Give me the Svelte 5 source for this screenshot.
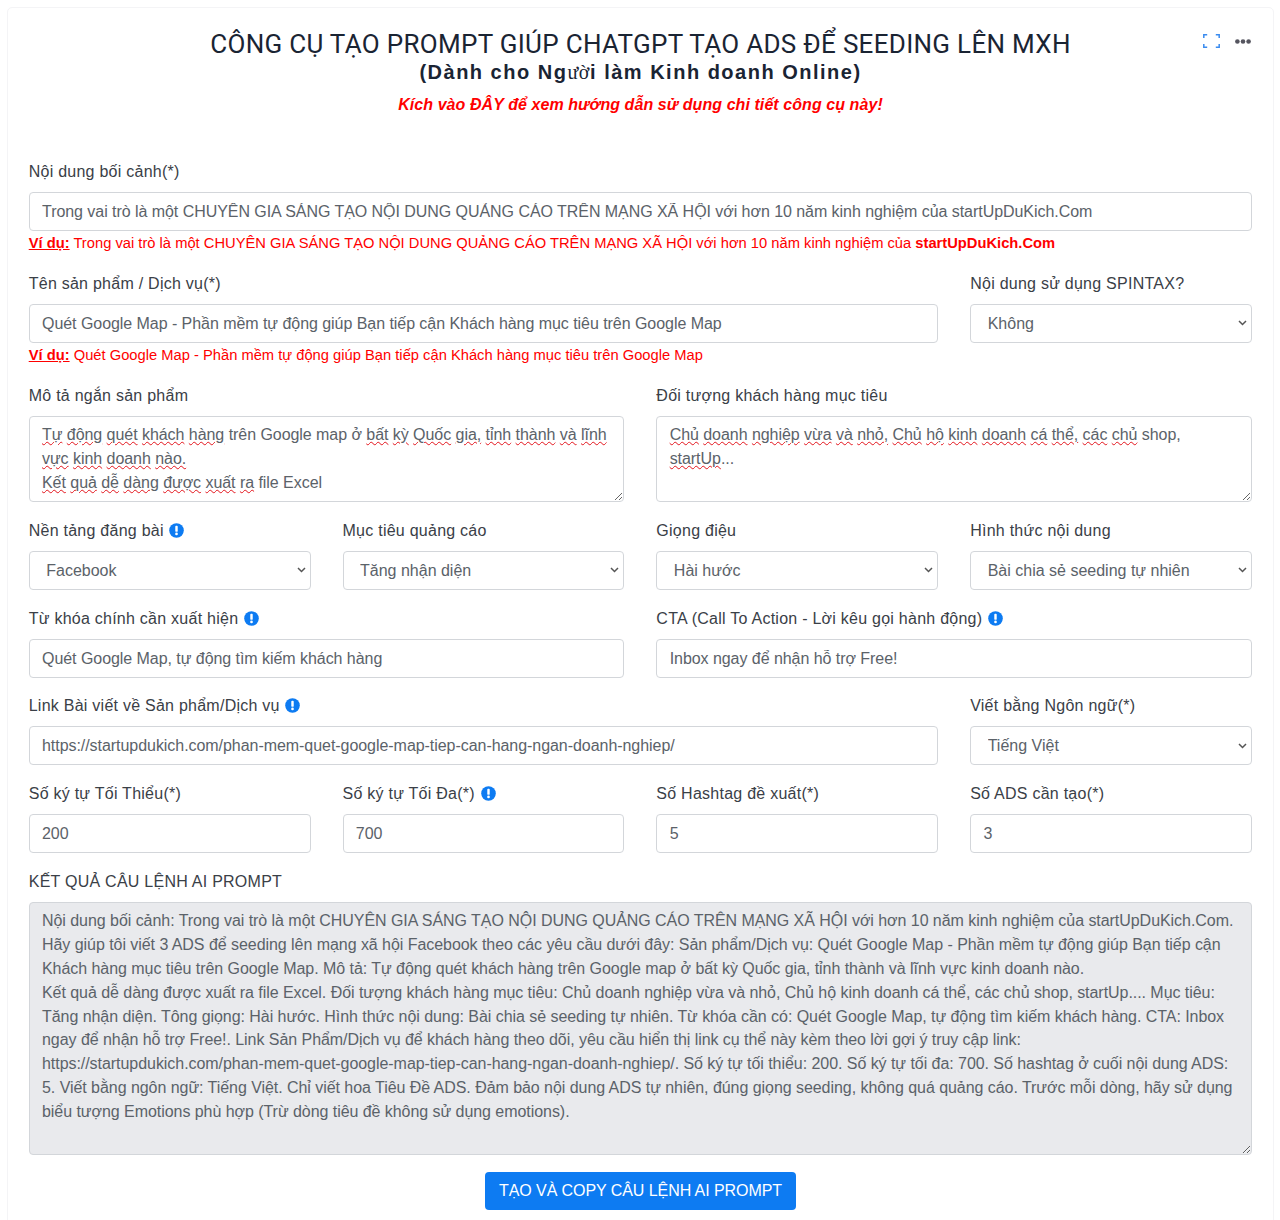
<script>
  const bullet = (t) => t.split(' ');
  const result = `Nội dung bối cảnh: Trong vai trò là một CHUYÊN GIA SÁNG TẠO NỘI DUNG QUẢNG CÁO TRÊN MẠNG XÃ HỘI với hơn 10 năm kinh nghiệm của startUpDuKich.Com. Hãy giúp tôi viết 3 ADS để seeding lên mạng xã hội Facebook theo các yêu cầu dưới đây: Sản phẩm/Dịch vụ: Quét Google Map - Phần mềm tự động giúp Bạn tiếp cận Khách hàng mục tiêu trên Google Map. Mô tả: Tự động quét khách hàng trên Google map ở bất kỳ Quốc gia, tỉnh thành và lĩnh vực kinh doanh nào.
Kết quả dễ dàng được xuất ra file Excel. Đối tượng khách hàng mục tiêu: Chủ doanh nghiệp vừa và nhỏ, Chủ hộ kinh doanh cá thể, các chủ shop, startUp.... Mục tiêu: Tăng nhận diện. Tông giọng: Hài hước. Hình thức nội dung: Bài chia sẻ seeding tự nhiên. Từ khóa cần có: Quét Google Map, tự động tìm kiếm khách hàng. CTA: Inbox ngay để nhận hỗ trợ Free!. Link Sản Phẩm/Dịch vụ để khách hàng theo dõi, yêu cầu hiển thị link cụ thể này kèm theo lời gợi ý truy cập link: https://startupdukich.com/phan-mem-quet-google-map-tiep-can-hang-ngan-doanh-nghiep/. Số ký tự tối thiểu: 200. Số ký tự tối đa: 700. Số hashtag ở cuối nội dung ADS: 5. Viết bằng ngôn ngữ: Tiếng Việt. Chỉ viết hoa Tiêu Đề ADS. Đảm bảo nội dung ADS tự nhiên, đúng giọng seeding, không quá quảng cáo. Trước mỗi dòng, hãy sử dụng biểu tượng Emotions phù hợp (Trừ dòng tiêu đề không sử dụng emotions).`;
</script>

{#snippet info()}
  <svg class="info" viewBox="0 0 16 16" aria-hidden="true">
    <circle cx="8" cy="8" r="7.8" fill="#0d7bf2" />
    <rect x="6.7" y="3" width="2.6" height="6.4" rx="1" fill="#fff" />
    <circle cx="8" cy="11.7" r="1.45" fill="#fff" />
  </svg>
{/snippet}

{#snippet wavy(text)}
  {#each bullet(text) as word, i}{#if i > 0}{' '}{/if}<span class="wavy">{word}</span>{/each}
{/snippet}

<div class="card">
  <header>
    <h1>CÔNG CỤ TẠO PROMPT GIÚP CHATGPT TẠO ADS ĐỂ SEEDING LÊN MXH</h1>
    <h2>(Dành cho Ng<span class="fallback">ườ</span>i làm Kinh doanh Online)</h2>
    <a href="#guide">Kích vào ĐÂY để xem hướng dẫn sử dụng chi tiết công cụ này!</a>
    <div class="tools">
      <svg class="expand" viewBox="0 0 17 14" aria-hidden="true">
        <path d="M.8 4V.8h3.4M12.8.8h3.4V4M16.2 10v3.2h-3.4M4.2 13.2H.8V10" fill="none" stroke="#3a8bef" stroke-width="1.5" />
      </svg>
      <svg class="dots" viewBox="0 0 16 5" aria-hidden="true">
        <circle cx="2.4" cy="2.5" r="2.3" /><circle cx="8" cy="2.5" r="2.3" /><circle cx="13.6" cy="2.5" r="2.3" />
      </svg>
    </div>
  </header>

  <form>
    <div class="field full">
      <label for="context">Nội dung bối cảnh(*)</label>
      <input id="context" value="Trong vai trò là một CHUYÊN GIA SÁNG TẠO NỘI DUNG QUẢNG CÁO TRÊN MẠNG XÃ HỘI với hơn 10 năm kinh nghiệm của startUpDuKich.Com" />
      <p class="hint"><b>Ví dụ:</b> Trong vai trò là một CHUYÊN GIA SÁNG TẠO NỘI DUNG QUẢNG CÁO TRÊN MẠNG XÃ HỘI với hơn 10 năm kinh nghiệm của <strong>startUpDuKich.Com</strong></p>
    </div>

    <div class="field span3">
      <label for="product">Tên sản phẩm / Dịch vụ(*)</label>
      <input id="product" value="Quét Google Map - Phần mềm tự động giúp Bạn tiếp cận Khách hàng mục tiêu trên Google Map" />
      <p class="hint"><b>Ví dụ:</b> Quét Google Map - Phần mềm tự động giúp Bạn tiếp cận Khách hàng mục tiêu trên Google Map</p>
    </div>
    <div class="field">
      <label for="spintax">Nội dung sử dụng SPINTAX?</label>
      <select id="spintax"><option>Không</option><option>Có</option></select>
    </div>

    <div class="field span2">
      <span class="label">Mô tả ngắn sản phẩm</span>
      <div class="area" role="textbox" tabindex="0">{@render wavy('Tự động quét khách hàng')} trên Google map ở {@render wavy('bất kỳ Quốc gia, tỉnh thành và lĩnh vực kinh doanh nào.')}<br />{@render wavy('Kết quả dễ dàng được xuất ra')} file Excel</div>
    </div>
    <div class="field span2">
      <span class="label">Đối tượng khách hàng mục tiêu</span>
      <div class="area" role="textbox" tabindex="0">{@render wavy('Chủ doanh nghiệp vừa và nhỏ, Chủ hộ kinh doanh cá thể, các chủ')} shop, <span class="wavy">startUp</span>...</div>
    </div>

    <div class="field">
      <label for="platform">Nền tảng đăng bài {@render info()}</label>
      <select id="platform"><option>Facebook</option></select>
    </div>
    <div class="field">
      <label for="goal">Mục tiêu quảng cáo</label>
      <select id="goal"><option>Tăng nhận diện</option></select>
    </div>
    <div class="field">
      <label for="tone">Giọng điệu</label>
      <select id="tone"><option>Hài hước</option></select>
    </div>
    <div class="field">
      <label for="format">Hình thức nội dung</label>
      <select id="format"><option>Bài chia sẻ seeding tự nhiên</option></select>
    </div>

    <div class="field span2">
      <label for="keyword">Từ khóa chính cần xuất hiện {@render info()}</label>
      <input id="keyword" value="Quét Google Map, tự động tìm kiếm khách hàng" />
    </div>
    <div class="field span2">
      <label for="cta">CTA (Call To Action - Lời kêu gọi hành động) {@render info()}</label>
      <input id="cta" value="Inbox ngay để nhận hỗ trợ Free!" />
    </div>

    <div class="field span3">
      <label for="link">Link Bài viết về Sản phẩm/Dịch vụ {@render info()}</label>
      <input id="link" value="https://startupdukich.com/phan-mem-quet-google-map-tiep-can-hang-ngan-doanh-nghiep/" />
    </div>
    <div class="field">
      <label for="lang">Viết bằng Ngôn ngữ(*)</label>
      <select id="lang"><option>Tiếng Việt</option></select>
    </div>

    <div class="field">
      <label for="min">Số ký tự Tối Thiểu(*)</label>
      <input id="min" value="200" />
    </div>
    <div class="field">
      <label for="max">Số ký tự Tối Đa(*) {@render info()}</label>
      <input id="max" value="700" />
    </div>
    <div class="field">
      <label for="tags">Số Hashtag đề xuất(*)</label>
      <input id="tags" value="5" />
    </div>
    <div class="field">
      <label for="count">Số ADS cần tạo(*)</label>
      <input id="count" value="3" />
    </div>

    <div class="field full last">
      <label for="result">KẾT QUẢ CÂU LỆNH AI PROMPT</label>
      <textarea id="result" readonly spellcheck="false" value={result}></textarea>
    </div>
  </form>

  <div class="actions">
    <button type="button">TẠO VÀ COPY CÂU LỆNH AI PROMPT</button>
  </div>
</div>

<style>
  :global(body) {
    background: #fff;
    font-family: "Liberation Sans", Arial, sans-serif;
    font-size: 16px;
    color: #212529;
  }

  .card {
    position: relative;
    margin: 7px 6px 0 7px;
    padding: 0 21px 30px;
    border: 1px solid #f4f4f6;
    border-radius: 5px;
  }

  header {
    text-align: center;
    padding-top: 20px;
    height: 151px;
    box-sizing: border-box;
  }

  h1 {
    margin: 0;
    font-family: Roboto, sans-serif;
    font-weight: 400;
    font-size: 26px;
    line-height: 32px;
    letter-spacing: 0.3px;
    color: #1a2433;
  }

  h2 {
    margin: 0;
    font-size: 20px;
    line-height: 24px;
    font-weight: 700;
    letter-spacing: 1.5px;
    color: #1a2433;
  }

  .fallback {
    font-family: "Liberation Serif", serif;
    font-weight: 400;
    letter-spacing: 0.6px;
  }

  header a {
    display: block;
    margin-top: 9px;
    font-size: 16px;
    line-height: 24px;
    font-weight: 700;
    font-style: italic;
    letter-spacing: 0.07px;
    color: #f00;
    text-decoration: none;
  }

  .tools {
    position: absolute;
    top: 26px;
    right: 22px;
    display: flex;
    align-items: center;
    gap: 15px;
  }

  .expand {
    width: 17px;
    height: 14px;
  }

  .dots {
    width: 16px;
    height: 5px;
    fill: #55555f;
  }

  form {
    display: grid;
    grid-template-columns: repeat(4, 1fr);
    column-gap: 32px;
    margin-left: -0.3px;
  }

  .field {
    min-width: 0;
    margin-bottom: 15.75px;
  }

  .span2 { grid-column: span 2; }
  .span3 { grid-column: span 3; }
  .full { grid-column: 1 / -1; }
  .last { margin-bottom: 17px; }

  label, .label {
    display: block;
    height: 24px;
    line-height: 26px;
    margin-bottom: 9px;
    letter-spacing: 0.25px;
    color: #3a4047;
  }

  input, select, textarea, .area {
    display: block;
    width: 100%;
    box-sizing: border-box;
    font: inherit;
    line-height: 24px;
    letter-spacing: -0.05px;
    padding: 6px 12.3px;
    color: #5b6269;
    background: #fff;
    border: 1px solid #d3d6da;
    border-radius: 4px;
    outline: none;
  }

  input, select {
    height: 39px;
    padding-top: 6.5px;
    padding-bottom: 5.5px;
  }

  select {
    appearance: none;
    padding-left: 16.5px;
    letter-spacing: 0;
    background: #fff url("data:image/svg+xml,%3Csvg xmlns='http://www.w3.org/2000/svg' viewBox='0 0 9 6'%3E%3Cpath d='M1 1l3.5 3.5L8 1' fill='none' stroke='%23555' stroke-width='1.5'/%3E%3C/svg%3E") no-repeat right 4px center / 9px 6px;
  }

  .area {
    height: 86px;
    margin-bottom: 0.5px;
    padding-top: 6.4px;
    padding-bottom: 5px;
    line-height: 23.9px;
    overflow: auto;
    resize: vertical;
  }

  .wavy {
    text-decoration: underline wavy #e3141c 1px;
    text-underline-offset: 1px;
  }

  textarea {
    height: 253px;
    line-height: 23.9px;
    resize: vertical;
    background: #e9eaed;
  }

  .info {
    width: 15px;
    height: 15px;
    vertical-align: -2px;
    margin-left: 1px;
  }

  .hint {
    margin: 2px 0 0.5px;
    font-size: 14.72px;
    line-height: 21.6px;
    color: #f00;
  }

  .hint b {
    text-decoration: underline;
  }

  .actions {
    display: flex;
    justify-content: center;
  }

  button {
    height: 38px;
    padding: 0 13.5px;
    font: inherit;
    letter-spacing: -0.07px;
    color: #fff;
    background: #0d7bf2;
    border: none;
    border-radius: 4px;
  }
</style>
